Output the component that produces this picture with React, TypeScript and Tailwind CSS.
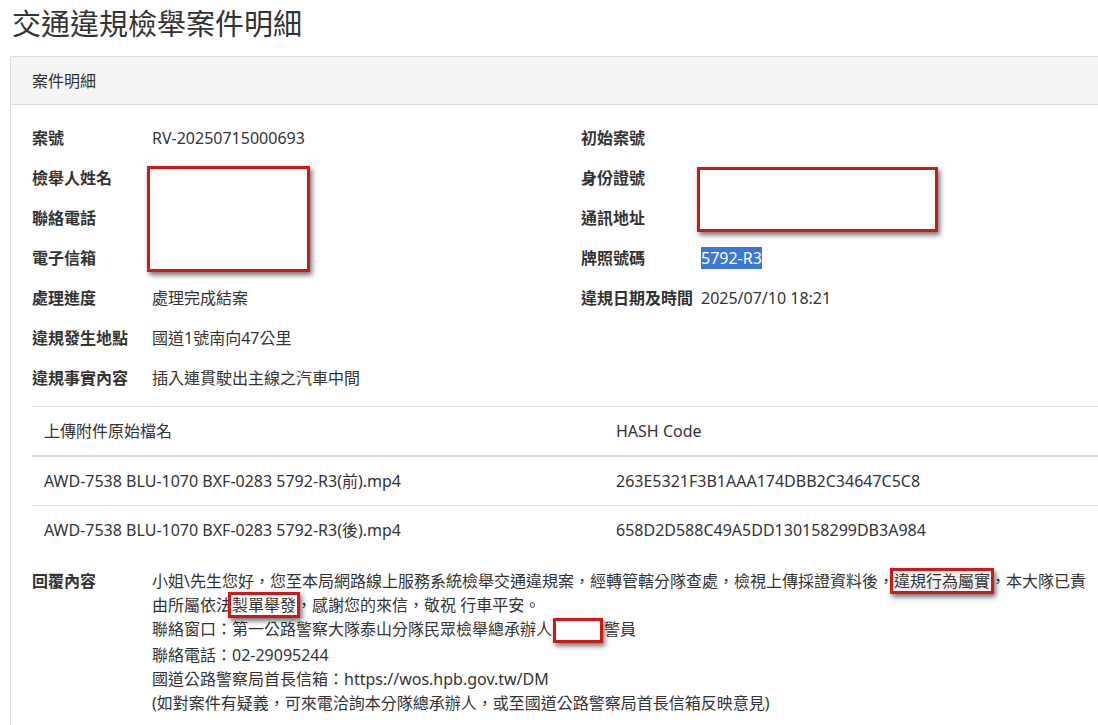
import React from 'react'

const FONT = { fontFamily: '"Noto Sans", "Noto Sans CJK TC", sans-serif' }

const leftRows: [string, React.ReactNode][] = [
  ['案號', 'RV-20250715000693'],
  ['檢舉人姓名', ''],
  ['聯絡電話', ''],
  ['電子信箱', ''],
  ['處理進度', '處理完成結案'],
  ['違規發生地點', '國道1號南向47公里'],
  ['違規事實內容', '插入連貫駛出主線之汽車中間'],
]

const rightRows: [string, React.ReactNode][] = [
  ['初始案號', ''],
  ['身份證號', ''],
  ['通訊地址', ''],
  ['牌照號碼', <span className="bg-[#3a77d6] text-white">5792-R3</span>],
  ['違規日期及時間', '2025/07/10 18:21'],
]

const files = [
  ['AWD-7538 BLU-1070 BXF-0283 5792-R3(前).mp4', '263E5321F3B1AAA174DBB2C34647C5C8'],
  ['AWD-7538 BLU-1070 BXF-0283 5792-R3(後).mp4', '658D2D588C49A5DD130158299DB3A984'],
]

// red annotation boxes drawn on top of the screenshot
const boxShadow = 'shadow-[2px_3px_5px_rgba(0,0,0,0.55)]'

function Field({ label, value }: { label: string; value: React.ReactNode }) {
  return (
    <div className="flex h-10 items-center">
      <div className="w-[120px] shrink-0 font-bold">{label}</div>
      <div>{value}</div>
    </div>
  )
}

function Marked({ children, grey }: { children: React.ReactNode; grey?: boolean }) {
  return (
    <span className="relative">
      <span
        className={`absolute -left-[4px] -right-[4px] -top-[2px] -bottom-[2px] border-[3px] border-[#cc1a1a] ${boxShadow} ${grey ? 'bg-[#f1f1f1]' : ''}`}
      />
      <span className="relative">{children}</span>
    </span>
  )
}

export default function App() {
  return (
    <div className="w-[1098px] h-[725px] overflow-hidden bg-white text-[16px] text-[#333]" style={FONT}>
      <h1 className="pl-[12px] text-[29px] font-normal leading-[48px] text-[#333]">交通違規檢舉案件明細</h1>

      <div className="ml-[10px] mt-2 w-[1110px] border border-[#dddddd]">
        {/* ── Panel heading ─────────────────────────── */}
        <div className="flex h-[48px] items-center border-b border-[#dddddd] bg-[#f5f5f5] pl-[21px]">
          案件明細
        </div>

        {/* ── Panel body ────────────────────────────── */}
        <div className="relative pb-6 pl-[21px] pt-[13px]">
          <div className="grid grid-cols-[549px_1fr]">
            <div>
              {leftRows.map(([l, v]) => (
                <Field key={l} label={l} value={v} />
              ))}
            </div>
            <div>
              {rightRows.map(([l, v]) => (
                <Field key={l} label={l} value={v} />
              ))}
            </div>
          </div>

          <div className={`absolute left-[136px] top-[61px] h-[106px] w-[163px] border-[3px] border-[#cc1a1a] bg-white ${boxShadow}`} />
          <div className={`absolute left-[686px] top-[62px] h-[65px] w-[241px] border-[3px] border-[#cc1a1a] bg-white ${boxShadow}`} />

          {/* ── Attachments ───────────────────────────── */}
          <table className="mt-2 w-full border-collapse text-left">
            <thead>
              <tr>
                <th className="w-[572px] border-b-2 border-t border-[#dddddd] px-3 py-3 font-normal leading-6">上傳附件原始檔名</th>
                <th className="border-b-2 border-t border-[#dddddd] px-3 py-3 font-normal leading-6">HASH Code</th>
              </tr>
            </thead>
            <tbody>
              {files.map(([name, hash], i) => (
                <tr key={hash}>
                  <td className={`px-3 py-3 leading-6 ${i > 0 ? 'border-t border-[#dddddd]' : ''}`}>{name}</td>
                  <td className={`px-3 py-3 leading-6 ${i > 0 ? 'border-t border-[#dddddd]' : ''}`}>{hash}</td>
                </tr>
              ))}
            </tbody>
          </table>

          {/* ── Reply ─────────────────────────────────── */}
          <div className="mt-[15px] flex leading-6">
            <div className="w-[120px] shrink-0 font-bold">回覆內容</div>
            <div>
              <div className="whitespace-nowrap">
                小姐\先生您好，您至本局網路線上服務系統檢舉交通違規案，經轉管轄分隊查處，檢視上傳採證資料後，<Marked grey>違規行為屬實</Marked>，本大隊已責
              </div>
              <div>
                由所屬依法<Marked>製單舉發</Marked>，感謝您的來信，敬祝 行車平安。
              </div>
              <div>
                聯絡窗口：第一公路警察大隊泰山分隊民眾檢舉總承辦人
                <span className={`mx-[1px] inline-block h-[25px] w-[50px] border-[3px] border-[#cc1a1a] bg-white align-middle ${boxShadow}`} />
                警員
              </div>
              <div>聯絡電話：02-29095244</div>
              <div>國道公路警察局首長信箱：https://wos.hpb.gov.tw/DM</div>
              <div>(如對案件有疑義，可來電洽詢本分隊總承辦人，或至國道公路警察局首長信箱反映意見)</div>
            </div>
          </div>
        </div>
      </div>
    </div>
  )
}
